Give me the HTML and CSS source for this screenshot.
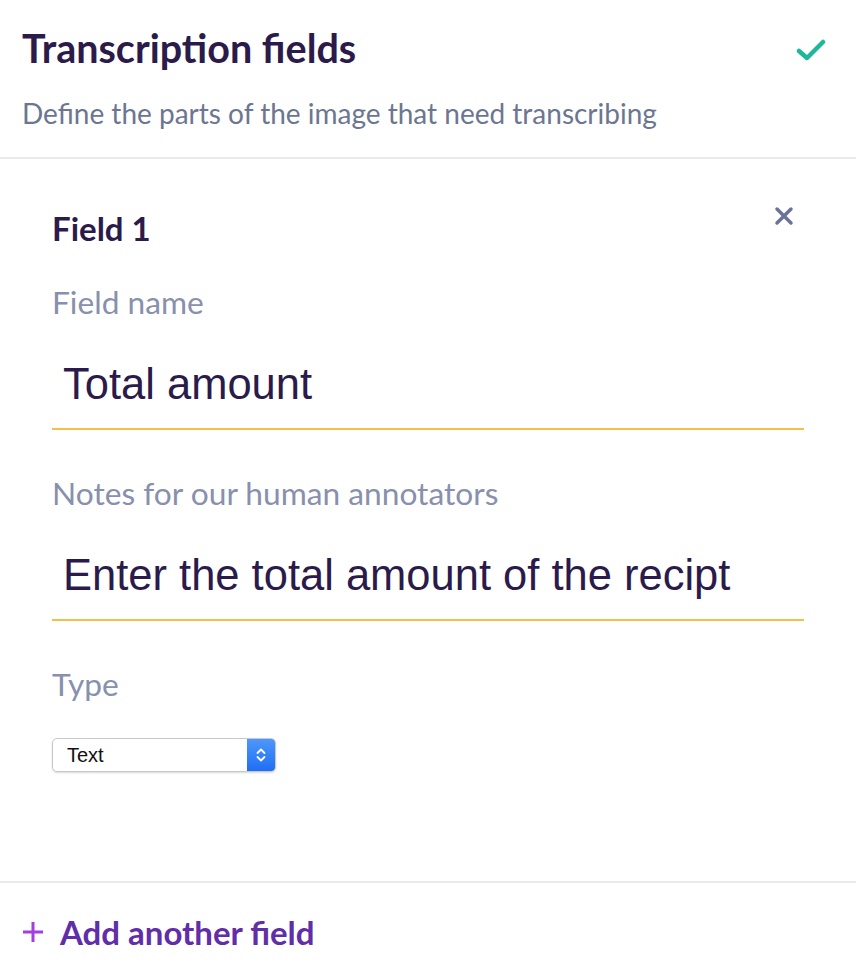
FILE: index.html
```html
<!DOCTYPE html>
<html lang="en">
<head>
  <meta charset="UTF-8" />
  <meta name="viewport" content="width=device-width, initial-scale=1.0"/>
  <title>Transcription fields</title>
  <link rel="stylesheet" href="styles.css">
</head>
<body>
  <header class="panel-head">
    <div class="head-row">
      <h1>Transcription fields</h1>
      <svg class="check" width="30" height="24" viewBox="0 0 30 24">
        <path d="M3 13 L11 20 L27 4" fill="none" stroke="#1db899" stroke-width="4.5" stroke-linecap="round" stroke-linejoin="round"/>
      </svg>
    </div>
    <p class="subtitle">Define the parts of the image that need transcribing</p>
  </header>

  <section class="field-card">
    <div class="field-top">
      <h2>Field 1</h2>
      <svg class="close" width="20" height="20" viewBox="0 0 20 20">
        <path d="M3 3 L17 17 M17 3 L3 17" stroke="#6b7396" stroke-width="3.5" stroke-linecap="round"/>
      </svg>
    </div>

    <label class="label">Field name</label>
    <div class="input-line">Total amount</div>

    <label class="label">Notes for our human annotators</label>
    <div class="input-line">Enter the total amount of the recipt</div>

    <label class="label">Type</label>
    <div class="fake-select">
      <span class="select-value">Text</span>
      <span class="select-arrows">
        <svg width="12" height="20" viewBox="0 0 12 20">
          <path d="M2.5 8 L6 4.5 L9.5 8 M2.5 12 L6 15.5 L9.5 12" fill="none" stroke="#fff" stroke-width="1.8" stroke-linecap="round" stroke-linejoin="round"/>
        </svg>
      </span>
    </div>
  </section>

  <footer class="panel-foot">
    <a class="add-field" href="#">
      <svg class="plus" width="22" height="22" viewBox="0 0 22 22">
        <path d="M11 1 V21 M1 11 H21" stroke="#a33ee0" stroke-width="3"/>
      </svg>
      Add another field
    </a>
  </footer>
</body>
</html>
```

FILE: styles.css
```css
body {
  margin: 0;
  font-family: 'Lato', sans-serif;
  background: #fff;
  color: #2a1a4a;
}

.panel-head {
  padding: 25px 30px 28px 22px;
  border-bottom: 2px solid #ebebee;
}

.head-row {
  display: flex;
  justify-content: space-between;
  align-items: center;
}

.panel-head h1 {
  margin: 0;
  font-size: 39.5px;
  font-weight: 700;
  line-height: 46px;
  color: #2b1b4b;
}

.check {
  margin-top: 4px;
}

.subtitle {
  margin: 26px 0 0;
  font-size: 28px;
  line-height: 32px;
  color: #6c7692;
}

.field-card {
  padding: 50px 52px 109px 52px;
  border-bottom: 2px solid #ebebee;
}

.field-top {
  display: flex;
  justify-content: space-between;
  align-items: flex-start;
}

.field-top h2 {
  margin: 0;
  font-size: 33px;
  line-height: 38px;
  font-weight: 700;
  color: #2b1b4b;
}

.close {
  margin-top: -3px;
  margin-right: 10px;
}

.label {
  display: block;
  margin-top: 45px;
  font-size: 31.7px;
  line-height: 36px;
  color: #8890ad;
}

.field-top + .label {
  margin-top: 37px;
}

.input-line {
  margin-top: 39px;
  padding: 0 0 19px 11px;
  font-family: 'Liberation Sans', Arial, sans-serif;
  font-size: 43.5px;
  line-height: 50px;
  color: #2b1b4b;
  border-bottom: 2px solid #f5c04a;
}

.fake-select {
  display: flex;
  width: 224px;
  height: 34px;
  margin-top: 36px;
  border: 1px solid #c8c8cc;
  border-radius: 5px;
  box-sizing: border-box;
  box-shadow: 0 1px 2px rgba(0,0,0,0.15);
  overflow: hidden;
}

.select-value {
  flex: 1;
  padding-left: 14px;
  font-family: 'Liberation Sans', Arial, sans-serif;
  font-size: 20px;
  line-height: 32px;
  color: #111;
}

.select-arrows {
  display: flex;
  align-items: center;
  justify-content: center;
  width: 28px;
  background: linear-gradient(to bottom, #4d98fb, #1f6ef5);
}

.panel-foot {
  padding: 31px 22px;
}

.add-field {
  display: inline-flex;
  align-items: center;
  font-size: 33px;
  line-height: 36px;
  font-weight: 700;
  color: #5f2ea8;
  text-decoration: none;
}

.plus {
  margin-right: 16px;
}
```
